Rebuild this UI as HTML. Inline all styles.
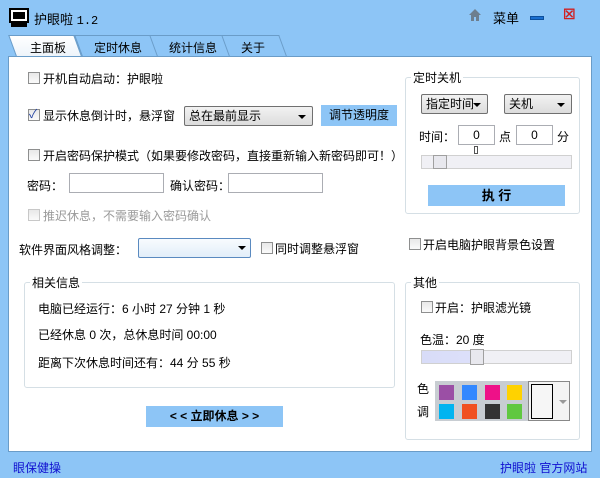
<!DOCTYPE html><html><head><meta charset="utf-8"><style>
*{margin:0;padding:0;box-sizing:border-box}
body{width:600px;height:478px;background:#8dc5f6;font:12px "Liberation Sans","Noto Sans CJK SC",sans-serif;color:#000;position:relative;overflow:hidden}
.a{position:absolute;white-space:nowrap}
.cb{position:absolute;width:12px;height:12px;border:1px solid #8e8f8f;background:linear-gradient(#e8e8e8,#fafafa)}
.inp{position:absolute;background:#fff;border:1px solid #abadb3;height:20px}
.grp{position:absolute;border:1px solid #d5dfe5;border-radius:3px}
.lg{position:absolute;background:#fff;padding:0 2px;font-size:12px}
.sel{position:absolute;border:1px solid #707070;border-radius:2px;background:linear-gradient(#f2f2f2,#dcdcdc);height:20px;padding-left:4px;line-height:18px}
.sel:after{content:"";position:absolute;right:6px;top:8px;border:4px solid transparent;border-top:4px solid #000;border-bottom:0}
.btn{position:absolute;background:#8dc5f6;text-align:center}
.tab{position:absolute;top:35px;height:21px;text-align:center;line-height:22px;font-size:12px}
.sc{position:absolute;height:14px;border:1px solid #d0d0d0;background:#f0f0f5}
.sw{position:absolute;width:15px;height:15px}
</style></head><body>
<svg class="a" style="left:9px;top:8px" width="20" height="20" viewBox="0 0 20 20"><rect x="1" y="1" width="18" height="13" fill="#fff" stroke="#000" stroke-width="2"/><rect x="4" y="4" width="12" height="7" fill="#000"/><rect x="2" y="15" width="16" height="4" fill="#000"/></svg>
<div class="a" style="left:34px;top:9px;font-size:13px">护眼啦 <span style="font-family:'Liberation Mono',monospace;font-size:12px">1.2</span></div>
<svg class="a" style="left:469px;top:9px" width="12" height="12" viewBox="0 0 12 12"><path d="M6 0L0 6h2v6h3V8h2v4h3V6h2z" fill="#6d7e8e"/></svg>
<div class="a" style="left:493px;top:8px;font-size:13px">菜单</div>
<div class="a" style="left:530px;top:16px;width:14px;height:4px;background:#1a6fd0;border:1px solid #0d4f9a"></div>
<div class="a" style="left:563px;top:6px;color:#d02020;font-size:14px;font-weight:bold">☒</div>
<div class="tab" style="left:150px;width:82px;background:#8dc5f6;border:1px solid #6a9cc8;border-bottom:0;transform:skewX(20deg)"></div>
<div class="tab" style="left:225px;width:58px;background:#8dc5f6;border:1px solid #6a9cc8;border-bottom:0;transform:skewX(20deg)"></div>
<div class="tab" style="left:78px;width:76px;background:#8dc5f6;border:1px solid #6a9cc8;border-bottom:0;transform:skewX(20deg)"></div>
<div class="tab" style="left:12px;width:66px;background:linear-gradient(#fff,#eef4fa);border:1px solid #6a9cc8;border-bottom:0;transform:skewX(20deg)"></div>
<div class="a" style="left:30px;top:39px">主面板</div>
<div class="a" style="left:94px;top:39px">定时休息</div>
<div class="a" style="left:169px;top:39px">统计信息</div>
<div class="a" style="left:241px;top:39px">关于</div>
<div class="a" style="left:8px;top:56px;width:584px;height:396px;background:#fff;border:1px solid #6a9cc8"></div>

<div class="cb" style="left:28px;top:72px"></div><div class="a" style="left:43px;top:70px">开机自动启动：护眼啦</div>
<div class="cb" style="left:28px;top:109px"></div><div class="a" style="left:29px;top:105px;color:#2040a0;font-size:12px">✓</div>
<div class="a" style="left:43px;top:107px">显示休息倒计时，悬浮窗</div>
<div class="sel" style="left:184px;top:106px;width:129px">总在最前显示</div>
<div class="btn" style="left:321px;top:105px;width:76px;height:21px;line-height:21px">调节透明度</div>
<div class="cb" style="left:28px;top:149px"></div><div class="a" style="left:43px;top:147px">开启密码保护模式（如果要修改密码，直接重新输入新密码即可！）</div>
<div class="a" style="left:27px;top:177px">密码：</div>
<div class="inp" style="left:69px;top:173px;width:95px"></div>
<div class="a" style="left:170px;top:177px">确认密码：</div>
<div class="inp" style="left:228px;top:173px;width:95px"></div>
<div class="cb" style="left:28px;top:209px;border-color:#c8c8c8"></div><div class="a" style="left:43px;top:207px;color:#9a9a9a">推迟休息，不需要输入密码确认</div>
<div class="a" style="left:19px;top:241px">软件界面风格调整：</div>
<div class="a" style="left:138px;top:238px;width:113px;height:20px;border:1px solid #5a8ac0;border-radius:2px;background:linear-gradient(#f8fbfe,#e2eef9)"></div>
<div class="a" style="left:238px;top:246px;border:4px solid transparent;border-top:4px solid #000;border-bottom:0"></div>
<div class="cb" style="left:261px;top:242px"></div><div class="a" style="left:275px;top:240px">同时调整悬浮窗</div>

<div class="grp" style="left:24px;top:282px;width:371px;height:106px"></div>
<div class="lg" style="left:30px;top:274px">相关信息</div>
<div class="a" style="left:38px;top:300px">电脑已经运行：6 小时 27 分钟 1 秒</div>
<div class="a" style="left:38px;top:326px">已经休息 0 次，总休息时间 00:00</div>
<div class="a" style="left:38px;top:354px">距离下次休息时间还有：44 分 55 秒</div>
<div class="btn" style="left:146px;top:406px;width:137px;height:21px;line-height:21px;font-weight:bold">&lt; &lt; 立即休息 &gt; &gt;</div>

<div class="grp" style="left:405px;top:77px;width:175px;height:137px"></div>
<div class="lg" style="left:411px;top:69px">定时关机</div>
<div class="sel" style="left:421px;top:94px;width:67px">指定时间</div>
<div class="sel" style="left:504px;top:94px;width:68px">关机</div>
<div class="a" style="left:419px;top:128px">时间：</div>
<div class="inp" style="left:458px;top:125px;width:37px;text-align:center;line-height:18px">0</div>
<div class="a" style="left:499px;top:128px">点</div>
<div class="inp" style="left:516px;top:125px;width:37px;text-align:center;line-height:18px">0</div>
<div class="a" style="left:557px;top:128px">分</div>
<div class="a" style="left:474px;top:146px;width:4px;height:8px;border:1px solid #555"></div>
<div class="sc" style="left:421px;top:155px;width:151px"></div>
<div class="a" style="left:433px;top:155px;width:14px;height:14px;border:1px solid #a0a0a0;background:#e8e8ee"></div>
<div class="btn" style="left:428px;top:185px;width:137px;height:21px;line-height:21px;font-weight:bold;font-size:13px">执 行</div>
<div class="cb" style="left:409px;top:238px"></div><div class="a" style="left:423px;top:236px">开启电脑护眼背景色设置</div>

<div class="grp" style="left:405px;top:282px;width:175px;height:158px"></div>
<div class="lg" style="left:411px;top:274px">其他</div>
<div class="cb" style="left:421px;top:301px"></div><div class="a" style="left:435px;top:299px">开启：护眼滤光镜</div>
<div class="a" style="left:420px;top:331px">色温：20 度</div>
<div class="sc" style="left:421px;top:350px;width:151px;background:linear-gradient(90deg,#d8dcf8 0,#dde0fa 55px,#f0f0f5 56px)"></div>
<div class="a" style="left:470px;top:349px;width:14px;height:16px;border:1px solid #a0a0a0;background:#e8e8ee"></div>
<div class="a" style="left:417px;top:380px">色</div>
<div class="a" style="left:417px;top:403px">调</div>
<div class="a" style="left:435px;top:381px;width:93px;height:40px;background:#c8cdd2"></div>
<div class="sw" style="left:439px;top:385px;background:#9b4fa5"></div>
<div class="sw" style="left:462px;top:385px;background:#3388ff"></div>
<div class="sw" style="left:485px;top:385px;background:#ee1188"></div>
<div class="sw" style="left:507px;top:385px;background:#ffd200"></div>
<div class="sw" style="left:439px;top:404px;background:#00b4f0"></div>
<div class="sw" style="left:462px;top:404px;background:#f05020"></div>
<div class="sw" style="left:485px;top:404px;background:#333"></div>
<div class="sw" style="left:507px;top:404px;background:#60c840"></div>
<div class="a" style="left:528px;top:381px;width:42px;height:40px;border:1px solid #888;background:#f4f4f4"></div>
<div class="a" style="left:531px;top:384px;width:22px;height:35px;border:1px solid #000;background:#f6f6f6"></div>
<div class="a" style="left:559px;top:400px;border:4px solid transparent;border-top:4px solid #999;border-bottom:0"></div>

<div class="a" style="left:13px;top:459px;color:#1010d0">眼保健操</div>
<div class="a" style="left:500px;top:459px;color:#1010d0">护眼啦 官方网站</div>
</body></html>
